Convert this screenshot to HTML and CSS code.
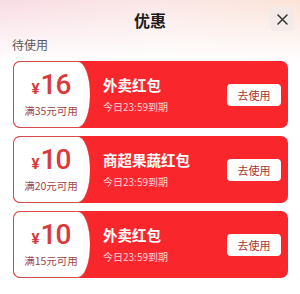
FILE: index.html
```html
<!DOCTYPE html>
<html lang="zh">
<head>
<meta charset="utf-8">
<link rel="stylesheet" href="styles.css">
</head>
<body>
<div class="page">
  <header class="header">
    <h1 class="title">优惠</h1>
    <button class="close" aria-label="关闭">
      <svg width="11" height="11" viewBox="0 0 11 11"><path d="M1 1L10 10M10 1L1 10" stroke="#333" stroke-width="1.5" stroke-linecap="round"/></svg>
    </button>
  </header>
  <div class="section-label">待使用</div>
  <div class="list">
    <div class="coupon">
      <div class="amount-box">
        <div class="amount"><span class="yen">¥</span><span class="num">16</span></div>
        <div class="cond">满35元可用</div>
      </div>
      <div class="info">
        <div class="name">外卖红包</div>
        <div class="expire">今日23:59到期</div>
      </div>
      <button class="use">去使用</button>
    </div>
    <div class="coupon">
      <div class="amount-box">
        <div class="amount"><span class="yen">¥</span><span class="num">10</span></div>
        <div class="cond">满20元可用</div>
      </div>
      <div class="info">
        <div class="name">商超果蔬红包</div>
        <div class="expire">今日23:59到期</div>
      </div>
      <button class="use">去使用</button>
    </div>
    <div class="coupon">
      <div class="amount-box">
        <div class="amount"><span class="yen">¥</span><span class="num">10</span></div>
        <div class="cond">满15元可用</div>
      </div>
      <div class="info">
        <div class="name">外卖红包</div>
        <div class="expire">今日23:59到期</div>
      </div>
      <button class="use">去使用</button>
    </div>
  </div>
</div>
</body>
</html>
```

FILE: styles.css
```css
* { box-sizing: border-box; }
html, body { margin: 0; padding: 0; }
body {
  width: 300px;
  height: 294px;
  overflow: hidden;
  font-family: "Noto Sans CJK SC", "Noto Sans", sans-serif;
  background: #fff;
}
.page {
  height: 294px;
  background:
    linear-gradient(to bottom, rgba(255,255,255,0) 0px, #fff 62px),
    linear-gradient(to right, #f8dce4 0%, #fbe7e6 55%, #fbe3d8 100%);
}
.header {
  position: relative;
  height: 38px;
  display: flex;
  align-items: center;
  justify-content: center;
}
.title {
  margin: 0;
  font-size: 16px;
  font-weight: 700;
  color: #1c1c1c;
  line-height: 20px;
  padding-top: 2px;
}
.close {
  position: absolute;
  right: 6px;
  top: 7px;
  width: 24px;
  height: 24px;
  border: none;
  border-radius: 4px;
  background: rgba(240, 234, 234, 0.75);
  display: flex;
  align-items: center;
  justify-content: center;
  padding: 0;
}
.section-label {
  padding-left: 12px;
  font-size: 12px;
  color: #5a5a5a;
  line-height: 14px;
}
.list {
  padding: 9px 12px 0 13px;
  display: flex;
  flex-direction: column;
  gap: 8px;
}
.coupon {
  height: 67px;
  background: #f9272c;
  border-radius: 7px;
  display: flex;
  align-items: center;
  overflow: hidden;
}
.amount-box {
  width: 77px;
  height: 100%;
  flex: none;
  background: #fff;
  border: 1.5px solid #d8494a;
  border-right: none;
  border-radius: 7px 12px 12px 7px / 7px 50% 50% 7px;
  display: flex;
  flex-direction: column;
  align-items: center;
  justify-content: center;
  padding-right: 2px;
}
.amount {
  color: #d93b3c;
  display: flex;
  align-items: baseline;
  line-height: 28px;
}
.yen {
  font-family: Roboto, sans-serif;
  font-size: 15px;
  font-weight: 700;
  margin-right: 1px;
}
.num {
  font-family: Roboto, sans-serif;
  font-size: 28px;
  font-weight: 500;
  letter-spacing: -1px;
}
.cond {
  font-size: 10.5px;
  color: #a04545;
  line-height: 14px;
  margin-top: 1px;
}
.info {
  flex: 1;
  padding-left: 13px;
  display: flex;
  flex-direction: column;
  gap: 6px;
}
.name {
  color: #fff;
  font-size: 14.5px;
  font-weight: 700;
  line-height: 18px;
}
.expire {
  color: #ffd2d2;
  font-size: 10px;
  line-height: 13px;
}
.use {
  flex: none;
  width: 54px;
  height: 22px;
  margin-right: 7px;
  margin-top: 1px;
  border: none;
  border-radius: 4px;
  background: #fff;
  color: #a83333;
  font-family: inherit;
  font-size: 11px;
  padding: 0;
}
```
